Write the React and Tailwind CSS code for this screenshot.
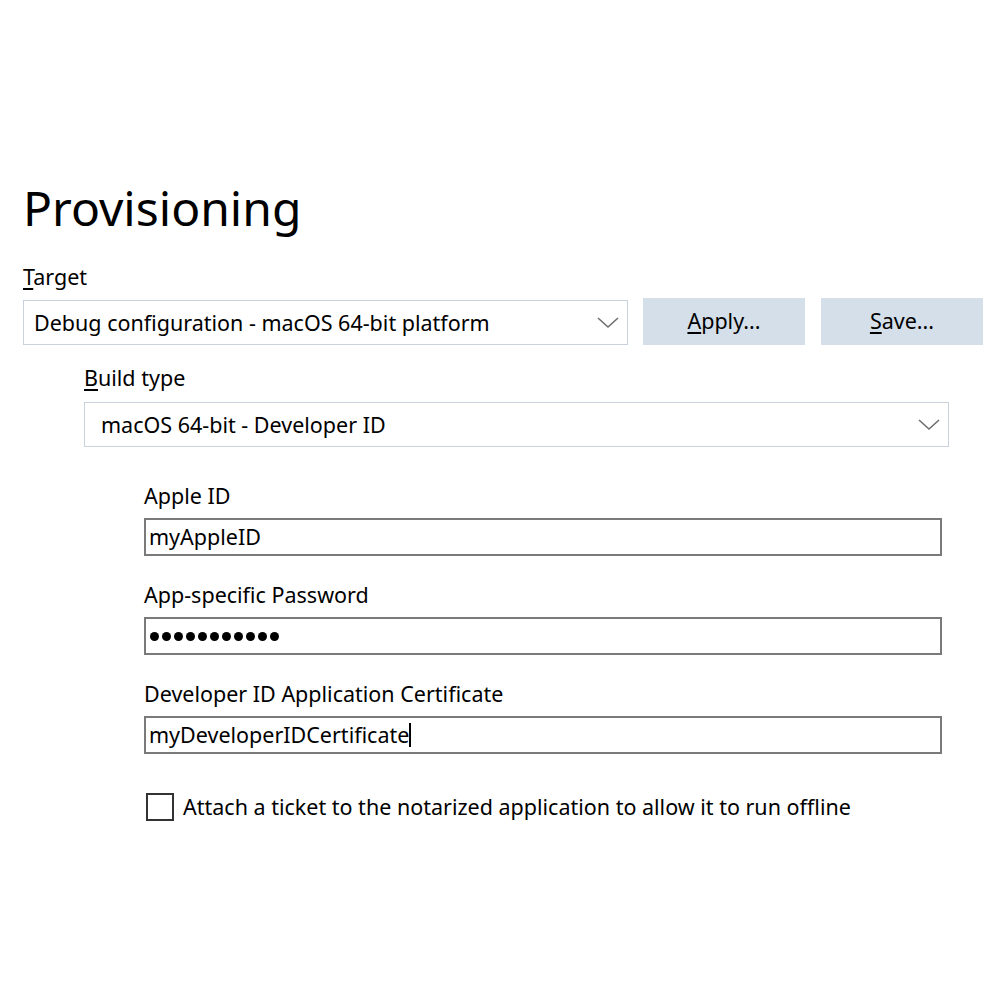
const font = { fontFamily: '"Noto Sans", "Open Sans", sans-serif' };

function Select({ text, className = "", pad = "pl-[10px]" }) {
  return (
    <div
      className={[
        "flex items-center justify-between h-[45px] border border-[#c7d2dd] bg-white",
        pad,
        className,
      ].join(" ")}
    >
      <span className="text-[21.5px] text-black leading-none">{text}</span>
      <svg width="22" height="12" viewBox="0 0 22 12" className="mr-[8px]">
        <path d="M1 1 L11 10 L21 1" fill="none" stroke="#6e6e6e" strokeWidth="1.6" />
      </svg>
    </div>
  );
}

function Field({ label, children }) {
  return (
    <div className="flex flex-col">
      <div className="text-[21.5px] leading-[28px] text-black mb-[8px]">{label}</div>
      <div className="flex items-center h-[38px] w-[798px] border-2 border-[#7a7a7a] bg-white pl-[3px]">
        {children}
      </div>
    </div>
  );
}

export default function App() {
  return (
    <div className="w-[1000px] h-[1000px] bg-white pl-[23px] pt-[176px]" style={font}>
      <h1 className="text-[48px] leading-[64px] font-normal text-black">Provisioning</h1>

      <div className="mt-[23px] text-[21.5px] leading-[28px] text-black">
        <span className="underline underline-offset-[3px]">T</span>arget
      </div>

      <div className="mt-[7px] flex items-end">
        <Select text="Debug configuration - macOS 64-bit platform" className="w-[605px]" />
        <button className="ml-[15px] w-[162px] h-[47px] bg-[#d4dfea] text-[21.5px] text-black">
          <span className="underline underline-offset-[3px]">A</span>pply...
        </button>
        <button className="ml-[16px] w-[162px] h-[47px] bg-[#d4dfea] text-[21.5px] text-black">
          <span className="underline underline-offset-[3px]">S</span>ave...
        </button>
      </div>

      <div className="ml-[61px] mt-[19px] flex flex-col">
        <div className="text-[21.5px] leading-[28px] text-black">
          <span className="underline underline-offset-[3px]">B</span>uild type
        </div>
        <Select text="macOS 64-bit - Developer ID" pad="pl-[16px]" className="mt-[10px] w-[865px]" />

        <div className="ml-[60px] mt-[35px] flex flex-col gap-[25px]">
          <Field label="Apple ID">
            <span className="text-[21.5px] leading-none text-black">myAppleID</span>
          </Field>
          <Field label="App-specific Password">
            <div className="flex items-center gap-[3px] pl-[1px]">
              {Array.from({ length: 11 }).map((_, i) => (
                <span key={i} className="w-[9px] h-[9px] rounded-full bg-black" />
              ))}
            </div>
          </Field>
          <Field label="Developer ID Application Certificate">
            <span className="text-[21.5px] leading-none text-black">myDeveloperIDCertificate</span>
            <span className="w-[2px] h-[24px] bg-black" />
          </Field>
        </div>

        <label className="ml-[62px] mt-[39px] flex items-center gap-[9px]">
          <span className="w-[28px] h-[28px] border-2 border-[#333333] bg-white" />
          <span className="text-[21.5px] leading-none text-black">
            Attach a ticket to the notarized application to allow it to run offline
          </span>
        </label>
      </div>
    </div>
  );
}
